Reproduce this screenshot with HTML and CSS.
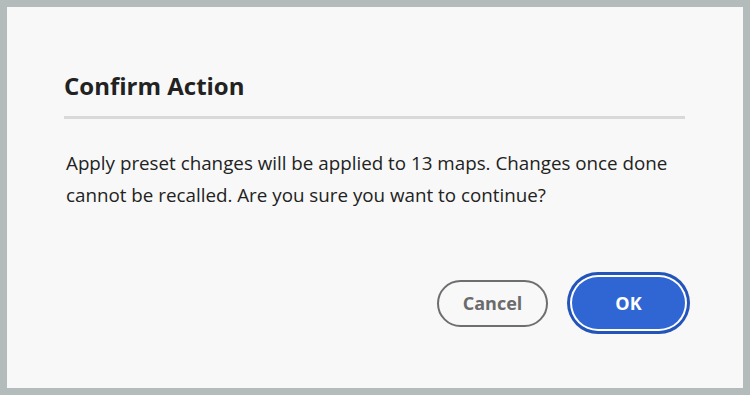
FILE: index.html
```html
<!DOCTYPE html>
<html lang="en">
<head>
  <meta charset="UTF-8">
  <meta name="viewport" content="width=device-width, initial-scale=1.0">
  <title>Confirm Action</title>
  <link rel="stylesheet" href="styles.css">
</head>
<body>
  <div class="dialog">
    <h2 class="dialog-title">Confirm Action</h2>
    <hr class="divider">
    <p class="dialog-text">Apply preset changes will be applied to 13 maps. Changes once done cannot be recalled. Are you sure you want to continue?</p>
    <div class="actions">
      <button class="btn cancel">Cancel</button>
      <button class="btn ok">OK</button>
    </div>
  </div>
</body>
</html>
```
FILE: styles.css
```css
html, body {
  margin: 0;
  height: 100%;
}
body {
  box-sizing: border-box;
  padding: 7px;
  background-color: #b4bcbb;
  font-family: 'Open Sans', 'Noto Sans', sans-serif;
  color: #222;
}
.dialog {
  box-sizing: border-box;
  height: 100%;
  background-color: #f8f8f8;
  padding: 63px 58px 59px 57px;
  display: flex;
  flex-direction: column;
}
.dialog-title {
  margin: 0;
  font-size: 24px;
  line-height: 32px;
  font-weight: 700;
  color: #222;
}
.divider {
  margin: 14px 0 0;
  border: none;
  height: 3px;
  background-color: #d9d9d9;
}
.dialog-text {
  margin: 28px 0 0 2px;
  font-size: 18.8px;
  line-height: 32px;
  max-width: 620px;
}
.actions {
  margin-top: auto;
  display: flex;
  justify-content: flex-end;
  align-items: center;
  gap: 24px;
}
.btn {
  font-family: inherit;
  font-size: 18px;
  font-weight: 700;
  border-radius: 24px;
  height: 47px;
  cursor: pointer;
}
.cancel {
  width: 111px;
  background: transparent;
  color: #6b6b6b;
  border: 2px solid #6e6e6e;
}
.ok {
  width: 113px;
  height: 52px;
  border-radius: 26px;
  border: none;
  color: #fff;
  background-color: #2f66d3;
  box-shadow: 0 0 0 2px #fff, 0 0 0 5px #2254b9;
}
```
